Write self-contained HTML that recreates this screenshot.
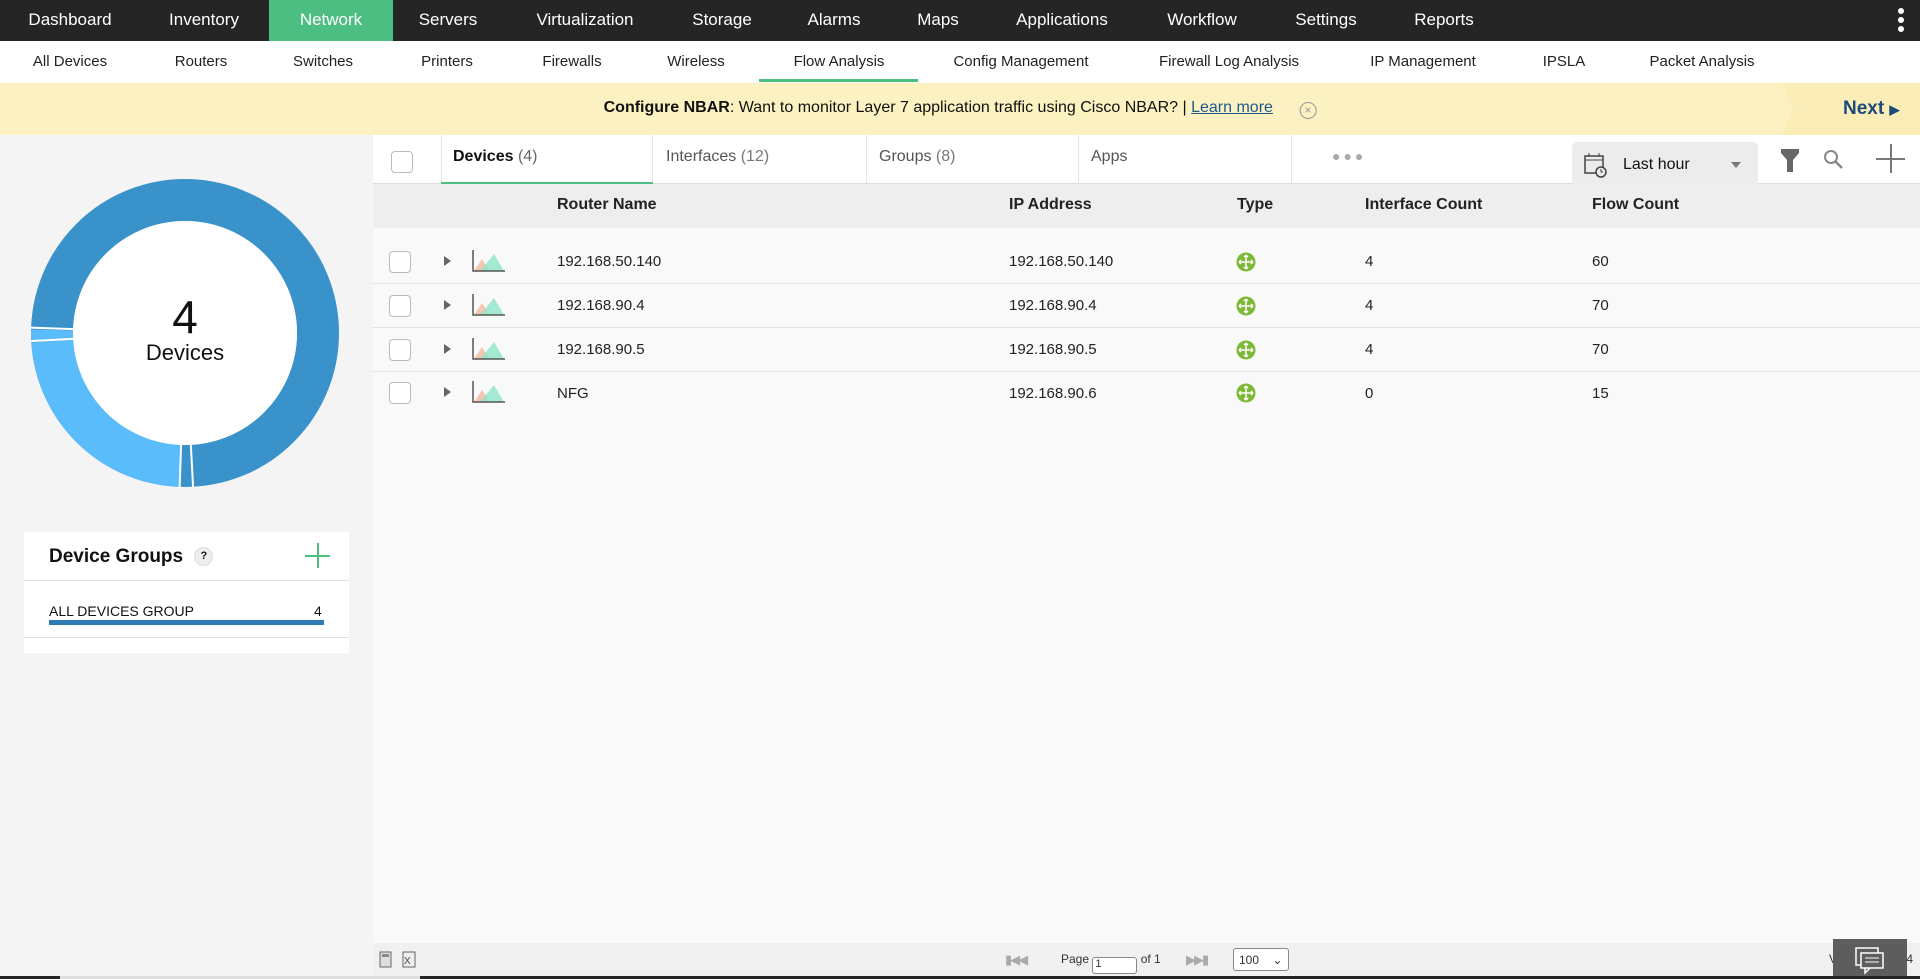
<!DOCTYPE html>
<html><head><meta charset="utf-8"><style>
*{margin:0;padding:0;box-sizing:border-box}
body{width:1920px;height:979px;overflow:hidden;font-family:"Liberation Sans",sans-serif;background:#f9f9f9;position:relative;color:#222}
.a{position:absolute}
.c{position:absolute;transform:translateX(-50%);white-space:nowrap}
#top{left:0;top:0;width:1920px;height:41px;background:#252525;color:#fff;font-size:17px}
#top .c{top:10px}
#sub{left:0;top:41px;width:1920px;height:42px;background:#fff;font-size:15px;color:#222}
#sub .c{top:12px}
#ban{left:0;top:83px;width:1920px;height:52px;background:#fcf1c0;box-shadow:0 2px 4px rgba(0,0,0,.12)}
#left{left:0;top:135px;width:373px;height:841px;background:#f4f4f4}
.row{position:absolute;left:373px;width:1547px;height:44px;border-bottom:1px solid #e2e2e2;font-size:15px}
.row span{position:absolute;top:13px}
.cb{position:absolute;width:22px;height:22px;border:1px solid #bbb;border-radius:4px;background:#fff}
.tri{position:absolute;width:0;height:0;border-left:7px solid #666;border-top:5px solid transparent;border-bottom:5px solid transparent}
</style></head><body>
<div id="top" class="a">
<div class="a" style="left:269px;top:0;width:124px;height:41px;background:#4cbe82"></div>
<span class="c" style="left:70px">Dashboard</span><span class="c" style="left:204px">Inventory</span><span class="c" style="left:331px">Network</span><span class="c" style="left:448px">Servers</span><span class="c" style="left:585px">Virtualization</span><span class="c" style="left:722px">Storage</span><span class="c" style="left:834px">Alarms</span><span class="c" style="left:938px">Maps</span><span class="c" style="left:1062px">Applications</span><span class="c" style="left:1202px">Workflow</span><span class="c" style="left:1326px">Settings</span><span class="c" style="left:1444px">Reports</span>
<div class="a" style="left:1898px;top:8px;width:6px;height:6px;border-radius:3px;background:#fff"></div>
<div class="a" style="left:1898px;top:17px;width:6px;height:6px;border-radius:3px;background:#fff"></div>
<div class="a" style="left:1898px;top:26px;width:6px;height:6px;border-radius:3px;background:#fff"></div>
</div>
<div id="sub" class="a">
<span class="c" style="left:70px">All Devices</span><span class="c" style="left:201px">Routers</span><span class="c" style="left:323px">Switches</span><span class="c" style="left:447px">Printers</span><span class="c" style="left:572px">Firewalls</span><span class="c" style="left:696px">Wireless</span><span class="c" style="left:839px">Flow Analysis</span><span class="c" style="left:1021px">Config Management</span><span class="c" style="left:1229px">Firewall Log Analysis</span><span class="c" style="left:1423px">IP Management</span><span class="c" style="left:1564px">IPSLA</span><span class="c" style="left:1702px">Packet Analysis</span>
<div class="a" style="left:759px;top:38px;width:159px;height:3px;background:#4cbe82"></div>
</div>
<div id="ban" class="a">
<div class="c" style="left:960px;top:16px;font-size:16px;color:#111"><b>Configure NBAR</b>: Want to monitor Layer 7 application traffic using Cisco NBAR? | <span style="color:#1c5a8c;text-decoration:underline">Learn more</span> <span style="display:inline-block;width:17px;height:17px;border:1.5px solid #999;border-radius:50%;color:#999;font-size:12px;text-align:center;line-height:14px;margin-left:22px;vertical-align:-2px">×</span></div>
<div class="a" style="left:1782px;top:0;width:138px;height:52px;background:#faedb8;clip-path:polygon(0 0,100% 0,100% 100%,0 100%,8% 50%)"></div>
<div class="a" style="left:1843px;top:15px;font-size:19px;font-weight:bold;color:#1c4a7a">Next <span style="font-size:13px">▶</span></div>
</div>
<div id="left" class="a">
<svg class="a" style="left:0;top:0" width="373" height="400"><g transform="translate(185,198)">
<circle r="133" fill="none" stroke="#3a92cb" stroke-width="42"/>
<circle r="133" fill="none" stroke="#5bbcfc" stroke-width="42" stroke-dasharray="196 640" transform="rotate(92)"/>
<circle r="133" fill="none" stroke="#5bbcfc" stroke-width="42" stroke-dasharray="10 830" transform="rotate(177)"/>
<line x1="0" y1="112" x2="0" y2="155" stroke="#fff" stroke-width="2" transform="rotate(-3)"/>
<line x1="0" y1="112" x2="0" y2="155" stroke="#fff" stroke-width="2" transform="rotate(2)"/>
<line x1="0" y1="112" x2="0" y2="155" stroke="#fff" stroke-width="2" transform="rotate(87)"/>
<line x1="0" y1="112" x2="0" y2="155" stroke="#fff" stroke-width="2" transform="rotate(92)"/>
<circle r="112" fill="#fff"/></g></svg>
<div class="c" style="left:185px;top:155px;font-size:46px;color:#111">4</div>
<div class="c" style="left:185px;top:205px;font-size:22px;color:#111">Devices</div>
<div class="a" style="left:24px;top:397px;width:325px;height:121px;background:#fff">
<div class="a" style="left:0;top:48px;width:325px;height:1px;background:#e2e2e2"></div>
<div class="a" style="left:25px;top:14px;font-size:19px;font-weight:bold;color:#111">Device Groups <span style="display:inline-block;width:19px;height:19px;border-radius:50%;background:#eee;border:1px solid #ddd;font-size:11px;text-align:center;line-height:17px;vertical-align:3px;margin-left:6px">?</span></div>
<div class="a" style="left:281px;top:23px;width:25px;height:1.5px;background:#4cbe82"></div>
<div class="a" style="left:293px;top:11px;width:1.5px;height:25px;background:#4cbe82"></div>
<div class="a" style="left:25px;top:71px;font-size:14px;color:#111">ALL DEVICES GROUP</div>
<div class="a" style="left:290px;top:71px;font-size:14px;color:#111">4</div>
<div class="a" style="left:25px;top:88px;width:275px;height:5px;background:#2e7bb6"></div>
<div class="a" style="left:0;top:105px;width:325px;height:1px;background:#e2e2e2"></div>
</div>
</div>
<!-- tabs -->
<div class="a" style="left:373px;top:135px;width:1547px;height:49px;background:#fff;border-bottom:1px solid #ddd"></div>
<div class="cb" style="left:391px;top:151px"></div>
<div class="a" style="left:441px;top:135px;width:212px;height:49px;border-right:1px solid #e5e5e5;border-left:1px solid #e5e5e5"></div>
<div class="a" style="left:441px;top:182px;width:212px;height:2px;background:#4cbe82"></div>
<div class="a" style="left:866px;top:135px;width:1px;height:49px;background:#e5e5e5"></div>
<div class="a" style="left:1078px;top:135px;width:1px;height:49px;background:#e5e5e5"></div>
<div class="a" style="left:1291px;top:135px;width:1px;height:49px;background:#e5e5e5"></div>
<div class="a" style="left:453px;top:148px;font-size:16px;font-weight:bold;color:#111">Devices <span style="font-weight:normal;color:#666">(4)</span></div>
<div class="a" style="left:666px;top:148px;font-size:16px;color:#555">Interfaces <span style="color:#777">(12)</span></div>
<div class="a" style="left:879px;top:148px;font-size:16px;color:#555">Groups <span style="color:#777">(8)</span></div>
<div class="a" style="left:1091px;top:148px;font-size:16px;color:#555">Apps</div>
<div class="a" style="left:1332px;top:148px;font-size:14px;color:#aaa;letter-spacing:3px">●●●</div>
<div class="a" style="left:1572px;top:142px;width:186px;height:45px;background:#ececec;border-radius:5px">
<svg class="a" style="left:12px;top:10px" width="24" height="26"><rect x="1" y="4" width="18" height="17" fill="none" stroke="#444" stroke-width="1.5"/><line x1="1" y1="8" x2="19" y2="8" stroke="#444"/><line x1="5" y1="1" x2="5" y2="5" stroke="#444"/><line x1="15" y1="1" x2="15" y2="5" stroke="#444"/><circle cx="17" cy="20" r="5" fill="#ececec" stroke="#444" stroke-width="1.5"/><path d="M17 17v3h2" stroke="#444" fill="none"/></svg>
<div class="a" style="left:51px;top:14px;font-size:16px;color:#111">Last hour</div>
<div class="a" style="left:159px;top:20px;border-top:6px solid #777;border-left:5px solid transparent;border-right:5px solid transparent"></div>
</div>
<svg class="a" style="left:1779px;top:148px" width="22" height="26"><path d="M2 1h18v4l-6 7v12h-6v-12l-6-7z" fill="#666"/></svg>
<svg class="a" style="left:1823px;top:149px" width="22" height="22"><circle cx="8" cy="8" r="6" fill="none" stroke="#888" stroke-width="2"/><line x1="12.5" y1="12.5" x2="19" y2="19" stroke="#888" stroke-width="2.5"/></svg>
<div class="a" style="left:1876px;top:158px;width:29px;height:1.5px;background:#777"></div>
<div class="a" style="left:1890px;top:144px;width:1.5px;height:29px;background:#777"></div>
<!-- header -->
<div class="a" style="left:373px;top:184px;width:1547px;height:44px;background:#eeeeee;font-size:16px;font-weight:bold;color:#222">
<span class="a" style="left:184px;top:12px">Router Name</span><span class="a" style="left:636px;top:12px">IP Address</span><span class="a" style="left:864px;top:12px">Type</span><span class="a" style="left:992px;top:12px">Interface Count</span><span class="a" style="left:1219px;top:12px">Flow Count</span>
</div>
<!-- rows -->
<div class="row" style="top:240px"><span style="left:184px">192.168.50.140</span><span style="left:636px">192.168.50.140</span><span style="left:992px">4</span><span style="left:1219px">60</span></div>
<div class="row" style="top:284px"><span style="left:184px">192.168.90.4</span><span style="left:636px">192.168.90.4</span><span style="left:992px">4</span><span style="left:1219px">70</span></div>
<div class="row" style="top:328px"><span style="left:184px">192.168.90.5</span><span style="left:636px">192.168.90.5</span><span style="left:992px">4</span><span style="left:1219px">70</span></div>
<div class="row" style="top:372px;border-bottom:none"><span style="left:184px">NFG</span><span style="left:636px">192.168.90.6</span><span style="left:992px">0</span><span style="left:1219px">15</span></div>
<div id="icons"></div>
<script>
var ys=[262,306,350,393],h='';
ys.forEach(function(y){
h+='<div class="cb" style="left:389px;top:'+(y-11)+'px"></div>';
h+='<div class="tri" style="left:444px;top:'+(y-6)+'px"></div>';
h+='<svg class="a" style="left:472px;top:'+(y-12)+'px" width="34" height="22"><path d="M2 21L10 9 18 21z" fill="#f4b9a0" opacity=".8"/><path d="M8 21L22 4 32 21z" fill="#8fe6c8" opacity=".8"/><path d="M1 0v21h32" fill="none" stroke="#555" stroke-width="1.5"/></svg>';
h+='<svg class="a" style="left:1236px;top:'+(y-10)+'px" width="20" height="20"><circle cx="10" cy="10" r="9.5" fill="#7cb936"/><path d="M10 3v14M3 10h14M10 3l-2 2M10 3l2 2M10 17l-2-2M10 17l2-2M3 10l2-2M3 10l2 2M17 10l-2-2M17 10l-2 2" stroke="#fff" stroke-width="1.5" fill="none"/></svg>';
});
document.getElementById('icons').innerHTML=h;
</script>
<!-- footer -->
<div class="a" style="left:373px;top:943px;width:1547px;height:33px;background:#f0f0f0;font-size:12px;color:#333">
<svg class="a" style="left:6px;top:8px" width="40" height="18"><rect x="1" y="1" width="11" height="15" fill="#ddd" stroke="#666"/><rect x="3" y="3" width="7" height="3" fill="#888"/><rect x="24" y="1" width="12" height="15" fill="#eee" stroke="#666"/><text x="25" y="13" font-size="10" fill="#444">X</text></svg>
<div class="a" style="left:632px;top:9px;color:#aaa;font-size:13px;letter-spacing:-2px">▮◀◀</div>
<div class="a" style="left:688px;top:9px">Page <span style="display:inline-block;width:45px;height:17px;border:1px solid #888;border-radius:3px;background:#fff;vertical-align:-4px;font-size:11px;padding-left:2px">1</span> of 1</div>
<div class="a" style="left:813px;top:9px;color:#aaa;font-size:13px;letter-spacing:-2px">▶▶▮</div>
<div class="a" style="left:860px;top:5px;width:56px;height:23px;border:1px solid #888;border-radius:3px;background:#fff;padding:4px 0 0 5px">100 <span style="margin-left:10px">⌄</span></div>
<div class="a" style="left:1456px;top:9px">V</div><div class="a" style="left:1520px;top:9px">of 4</div>
</div>
<div class="a" style="left:1833px;top:939px;width:74px;height:40px;background:#5d5d5d">
<svg class="a" style="left:22px;top:8px" width="30" height="28"><rect x="1" y="1" width="22" height="17" fill="none" stroke="#fff" stroke-width="1.5"/><rect x="6" y="6" width="22" height="15" fill="#5d5d5d" stroke="#fff" stroke-width="1.5"/><line x1="10" y1="11" x2="24" y2="11" stroke="#fff"/><line x1="10" y1="15" x2="24" y2="15" stroke="#fff"/><path d="M10 21v5l5-5" fill="none" stroke="#fff" stroke-width="1.5"/></svg>
</div>
<div class="a" style="left:0;top:976px;width:1920px;height:3px;background:#252525"></div>
<div class="a" style="left:60px;top:976px;width:360px;height:3px;background:#ddd"></div>
</body></html>
